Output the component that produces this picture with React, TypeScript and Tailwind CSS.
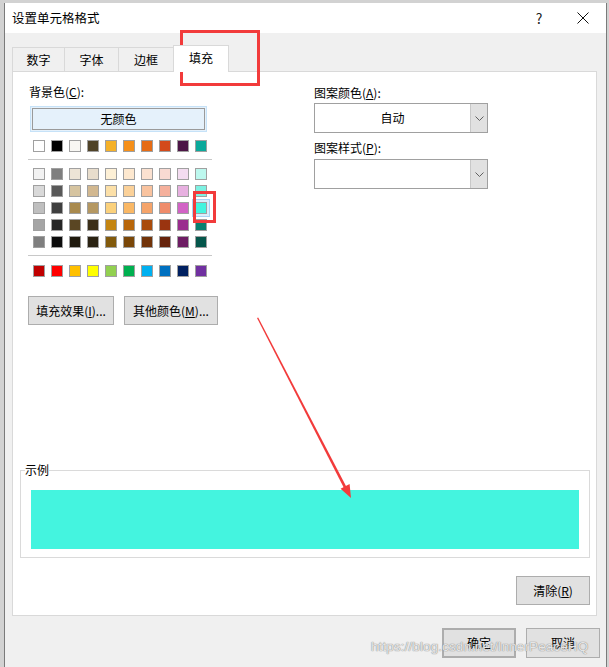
import React from 'react';

const themeRow = ['#ffffff', '#000000', '#f8f7f3', '#4f4328', '#f5b128', '#f6901a', '#e66c15', '#d34a1b', '#4c1546', '#0ba99b'];

const tintRows = [
  ['#f2f2f2', '#7f7f7f', '#ede4d6', '#e8ddcc', '#fdf0d6', '#fde8cf', '#fbe1d0', '#f8dad2', '#f3dcf0', '#bdf8ee'],
  ['#d9d9d9', '#595959', '#d6c4a0', '#d2b890', '#fce0a8', '#fbd199', '#f9c39f', '#f5b09c', '#e7b0e0', '#7df1e2'],
  ['#bfbfbf', '#3f3f3f', '#a98a4e', '#b59862', '#fbd17c', '#fab865', '#f5a46a', '#ef8c6b', '#d263c5', '#44f4df'],
  ['#a5a5a5', '#262626', '#5a4623', '#3c2f19', '#c48511', '#b8660a', '#a94c0c', '#9a3410', '#9a2d8e', '#08806f'],
  ['#7f7f7f', '#0c0c0c', '#201a0e', '#2a2212', '#825a0c', '#7a4708', '#713309', '#66230b', '#6d1c63', '#05564b'],
];

const standardRow = ['#c00000', '#ff0000', '#ffc000', '#ffff00', '#92d050', '#00b050', '#00b0f0', '#0070c0', '#002060', '#7030a0'];

const font = { fontFamily: '"Noto Sans CJK SC", "Noto Sans", sans-serif' };

function Swatch({ color, selected }: { color: string; selected?: boolean }) {
  return (
    <div
      className={
        'w-[12px] h-[12px] border border-[#a0a0a0] ' +
        (selected ? 'shadow-[0_0_0_2px_#dceefc,0_0_0_3px_#a9d4f5]' : '')
      }
      style={{ backgroundColor: color }}
    />
  );
}

function SwatchRow({ colors, selectedIndex }: { colors: string[]; selectedIndex?: number }) {
  return (
    <div className="flex gap-[6px] ml-[5px]">
      {colors.map((c, i) => (
        <Swatch key={i} color={c} selected={i === selectedIndex} />
      ))}
    </div>
  );
}

function Chevron() {
  return (
    <svg width="9" height="5" viewBox="0 0 9 5">
      <path d="M0.5 0.5 L4.5 4.5 L8.5 0.5" fill="none" stroke="#606060" strokeWidth="1" />
    </svg>
  );
}

function Select({ value }: { value?: string }) {
  return (
    <div className="flex w-[174px] h-[30px] border border-[#a0a0a0] bg-white">
      <div className="flex-1 flex items-center justify-center text-[12px] text-black">{value}</div>
      <div className="w-[17px] bg-[#e1e1e1] border-l border-[#c8c8c8] flex items-center justify-center">
        <Chevron />
      </div>
    </div>
  );
}

function Btn({ children, className = '' }: { children: React.ReactNode; className?: string }) {
  return (
    <div
      className={
        'shrink-0 h-[29px] flex items-center justify-center bg-[#e1e1e1] border border-[#adadad] text-[12px] text-black whitespace-nowrap ' +
        className
      }
    >
      {children}
    </div>
  );
}

const tabs = ['数字', '字体', '边框', '填充'];
const tabWidths = ['w-[52px]', 'w-[54px]', 'w-[55px]', 'w-[56px]'];

export default function App() {
  return (
    <div className="relative w-[609px] h-[667px] overflow-hidden bg-[#d2d2d2] pt-[3px] pl-[4px]" style={font}>
      <div className="w-[603px] h-[680px] border-x border-[#7a7a7a] bg-[#f0f0f0]">
        {/* title bar */}
        <div className="h-[30px] bg-white flex items-center pl-[7px]">
          <span className="text-[12.5px] text-black">设置单元格格式</span>
          <div className="ml-auto flex items-center">
            <div className="w-[44px] flex justify-center text-[14px] text-[#222]">?</div>
            <div className="w-[44px] mr-[1px] flex justify-center">
              <svg width="12" height="12" viewBox="0 0 12 12">
                <path d="M0.5 0.5 L11.5 11.5 M11.5 0.5 L0.5 11.5" stroke="#111" strokeWidth="1" />
              </svg>
            </div>
          </div>
        </div>

        <div className="pl-[7px] pr-[8px] pt-[12px]">
          {/* tabs */}
          <div className="flex items-end h-[26px] relative z-10">
            {tabs.map((t, i) => {
              const sel = i === 3;
              return (
                <div
                  key={t}
                  className={
                    tabWidths[i] +
                    ' flex items-center justify-center text-[12px] text-black border-t border-l border-[#d9d9d9] ' +
                    (sel ? 'h-[27px] bg-white border-r -mb-px pb-[2px]' : 'h-[24px] bg-[#f0f0f0]')
                  }
                >
                  {t}
                </div>
              );
            })}
          </div>

          {/* panel */}
          <div className="w-[585px] h-[545px] border border-[#d9d9d9] bg-white flex flex-col">
            <div className="flex">
              {/* left column */}
              <div className="w-[184px] shrink-0 ml-[15px] pt-[12px] flex flex-col">
                <div className="h-[16px] leading-[16px] text-[12px] text-black ml-px">
                  背景色(<span className="underline">C</span>):
                </div>
                <div className="mt-[6px] ml-[2px] w-[177px] h-[26px] border border-[#c6e2f8] bg-[#e5f1fb] p-px">
                  <div className="h-full border border-[#9a9a9a] flex items-center justify-center text-[12px] text-black">
                    无颜色
                  </div>
                </div>
                <div className="mt-[8px]">
                  <SwatchRow colors={themeRow} />
                </div>
                <div className="mt-[7px] h-px bg-[#c8c8c8]" />
                <div className="mt-[8px] flex flex-col gap-[5px]">
                  {tintRows.map((row, i) => (
                    <SwatchRow key={i} colors={row} selectedIndex={i === 2 ? 9 : undefined} />
                  ))}
                </div>
                <div className="mt-[7px] h-px bg-[#c8c8c8]" />
                <div className="mt-[9px]">
                  <SwatchRow colors={standardRow} />
                </div>
                <div className="mt-[19px] flex gap-[10px] w-[200px]">
                  <Btn className="w-[86px] h-[28px]">
                    填充效果(<span className="underline">I</span>)...
                  </Btn>
                  <Btn className="w-[94px] h-[28px]">
                    其他颜色(<span className="underline">M</span>)...
                  </Btn>
                </div>
              </div>

              {/* right column */}
              <div className="ml-[102px] pt-[13px] flex flex-col">
                <div className="h-[16px] leading-[16px] text-[12px] text-black">
                  图案颜色(<span className="underline">A</span>):
                </div>
                <div className="mt-[2px]">
                  <Select value="自动" />
                </div>
                <div className="mt-[7px] h-[16px] leading-[16px] text-[12px] text-black">
                  图案样式(<span className="underline">P</span>):
                </div>
                <div className="mt-[3px]">
                  <Select />
                </div>
              </div>
            </div>

            {/* sample */}
            <div className="relative mt-[145px] ml-[7px] w-[570px] h-[88px] border border-[#dadada] pt-[19px] pl-[10px]">
              <span className="absolute left-[4px] -top-[9px] bg-white text-[12px] leading-[16px] text-black">示例</span>
              <div className="w-[548px] h-[59px] bg-[#44f4df]" />
            </div>

            <div className="mt-[18px] flex justify-end pr-[6px]">
              <Btn className="w-[74px] h-[28px]">
                清除(<span className="underline">R</span>)
              </Btn>
            </div>
          </div>

          {/* bottom buttons */}
          <div className="mt-[12px] flex justify-end gap-[10px]">
            <Btn className="w-[74px] h-[30px] border-2 border-[#0078d7]">确定</Btn>
            <Btn className="w-[74px] h-[30px] mr-[-2px]">取消</Btn>
          </div>
        </div>
      </div>

      {/* annotations */}
      <div className="absolute left-[180px] top-[30px] w-[80px] h-[56px] border-[3px] border-[#f23b3b]" />
      <div className="absolute left-[193px] top-[191px] w-[23px] h-[32px] border-[3px] border-[#f23b3b]" />
      <svg className="absolute left-0 top-0" width="609" height="667" viewBox="0 0 609 667">
        <polygon points="257,318 258.2,317.6 347,488 344.6,489.2" fill="#f23b3b" />
        <polygon points="351,498 340.6,488.8 349.6,484" fill="#f23b3b" />
      </svg>
      <div
        className="absolute left-[371px] top-[637px] text-[13.5px] text-white/80 tracking-[0.1px]"
        style={{ fontFamily: '"Liberation Sans", Arial, sans-serif', textShadow: '0 0 1px #777, 0 0 1px #999' }}
      >
        https://blog.csdn.net/InnerPeaceHQ
      </div>
    </div>
  );
}
